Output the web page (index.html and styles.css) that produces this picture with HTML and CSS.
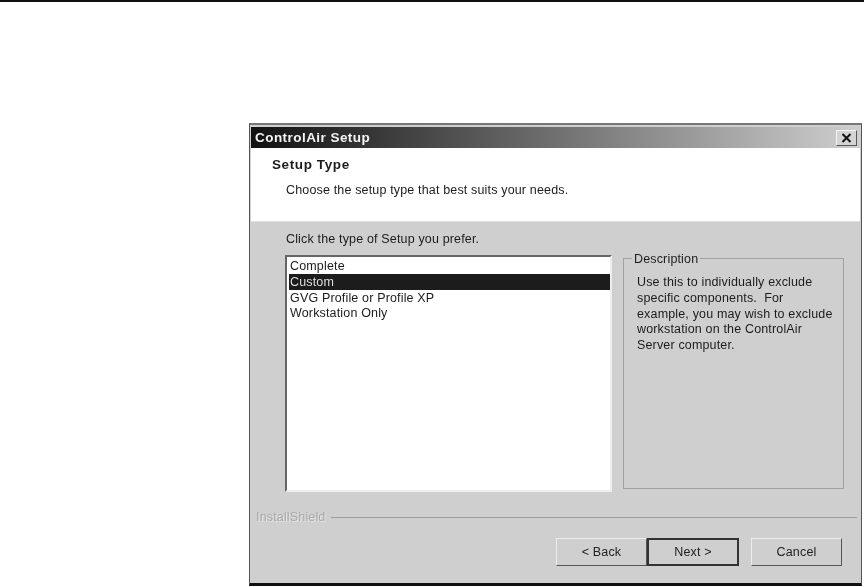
FILE: index.html
```html
<!DOCTYPE html>
<html lang="en">

<head>
    <meta charset="UTF-8">
    <title>ControlAir Setup</title>
    <link rel="stylesheet" href="styles.css">
</head>

<body>
    <div class="rule"></div>
    <div class="dialog">
        <div class="titlebar">
            <span class="title">ControlAir Setup</span>
            <span class="close">
                <svg width="11" height="10" viewBox="0 0 11 10">
                    <path d="M1.5 1 L9.5 9 M9.5 1 L1.5 9" stroke="#111" stroke-width="2" fill="none" />
                </svg>
            </span>
        </div>
        <div class="header">
            <h1>Setup Type</h1>
            <p>Choose the setup type that best suits your needs.</p>
        </div>
        <div class="content">
            <p class="prompt">Click the type of Setup you prefer.</p>
            <div class="columns">
                <ul class="list">
                    <li>Complete</li>
                    <li class="selected">Custom</li>
                    <li>GVG Profile or Profile XP</li>
                    <li>Workstation Only</li>
                </ul>
                <div class="group">
                    <span class="legend">Description</span>
                    <p>Use this to individually exclude specific components.&nbsp; For example, you may wish to exclude workstation on the ControlAir Server computer.</p>
                </div>
            </div>
            <div class="brand">
                <span>InstallShield</span>
                <div class="brand-line"></div>
            </div>
            <div class="buttons">
                <button class="btn">&lt; Back</button>
                <button class="btn btn-default">Next &gt;</button>
                <button class="btn btn-cancel">Cancel</button>
            </div>
        </div>
    </div>
</body>

</html>
```

FILE: styles.css
```css
* {
    padding: 0;
    margin: 0;
    box-sizing: border-box;
}

body {
    background-color: #fff;
    font: 12.5px "Liberation Sans", Arial, sans-serif;
    letter-spacing: 0.16px;
    color: #1c1c1c;
}

.rule {
    height: 2px;
    background-color: #111;
}

.dialog {
    width: 613px;
    height: 463px;
    margin: 121px 0 0 249px;
    background-color: #cfcfcf;
    border: 1px solid #555;
    border-top: 2px solid #777;
    border-bottom: 3px solid #111;
    padding-top: 2px;
    filter: blur(0.7px);
}

.titlebar {
    height: 21px;
    margin: 0 1px;
    padding: 0 3px 0 4px;
    display: flex;
    align-items: center;
    justify-content: space-between;
    background: linear-gradient(to right, #111, #cfcfcf);
}

.title {
    font-weight: bold;
    font-size: 13.5px;
    letter-spacing: 0.45px;
    color: #f4f4f4;
}

.close {
    width: 21px;
    height: 16px;
    display: flex;
    align-items: center;
    justify-content: center;
    background-color: #d4d4d4;
    border: 1px solid;
    border-color: #f4f4f4 #555 #555 #f4f4f4;
}

.header {
    height: 74px;
    margin: 0 1px;
    padding: 9px 0 0 21px;
    background-color: #fff;
    border-bottom: 1px solid #e0e0e0;
}

.header h1 {
    font-size: 13.5px;
    line-height: 16px;
    letter-spacing: 0.6px;
    font-weight: bold;
}

.header p {
    margin: 9px 0 0 14px;
    line-height: 16px;
}

.content {
    padding: 9px 0 0 35px;
}

.prompt {
    line-height: 16px;
    margin-left: 1px;
}

.columns {
    display: flex;
    margin-top: 8px;
    align-items: flex-start;
}

.list {
    width: 327px;
    height: 237px;
    list-style: none;
    padding: 1px 0 0 2px;
    background-color: #fff;
    border: 2px solid;
    border-color: #666 #eee #eee #666;
}

.list li {
    height: 15.75px;
    line-height: 16px;
    padding-left: 1px;
}

.list .selected {
    background-color: #1c1c1c;
    color: #ddd;
}

.group {
    position: relative;
    width: 221px;
    height: 231px;
    margin: 3px 0 0 11px;
    padding: 16px 8px 0 13px;
    border: 1px solid #a2a2a2;
}

.group p {
    line-height: 15.75px;
}

.legend {
    position: absolute;
    top: -7px;
    left: 8px;
    padding: 0 2px;
    line-height: 14px;
    background-color: #cfcfcf;
}

.brand {
    display: flex;
    align-items: center;
    margin: 18px 4px 0 -29px;
    color: #a9a9a9;
    text-shadow: 1px 1px 0 #e6e6e6;
}

.brand-line {
    flex: 1;
    height: 1px;
    margin-left: 6px;
    background-color: #9c9c9c;
}

.buttons {
    display: flex;
    margin: 14px 0 0 271px;
}

.btn {
    width: 91px;
    height: 28px;
    font: 12.5px "Liberation Sans", Arial, sans-serif;
    letter-spacing: 0.16px;
    color: #222;
    background-color: #cfcfcf;
    border: 1px solid;
    border-color: #ececec #555 #555 #ececec;
}

.btn-default {
    width: 92px;
    border: 2px solid #333;
}

.btn-cancel {
    margin-left: 12px;
}
```
